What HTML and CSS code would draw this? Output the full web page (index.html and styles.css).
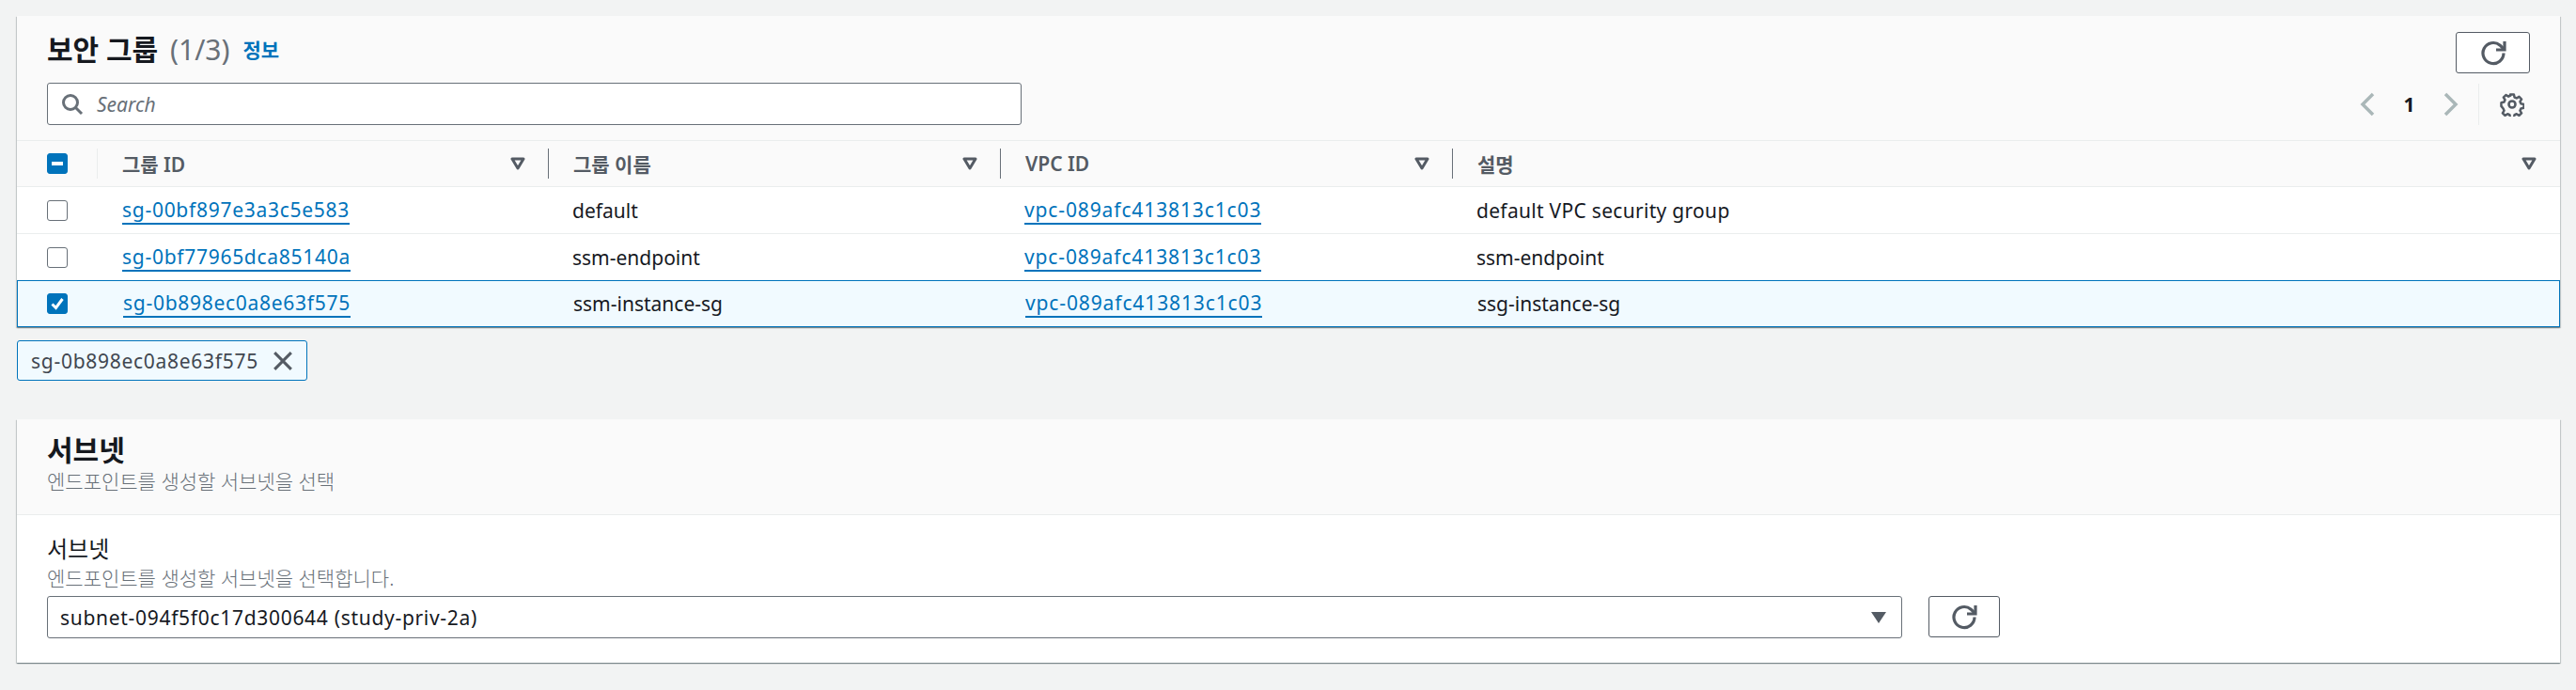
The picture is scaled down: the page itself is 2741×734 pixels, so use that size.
FILE: index.html
```html
<!DOCTYPE html>
<html lang="ko">
<head>
<meta charset="utf-8">
<title>보안 그룹</title>
<link rel="stylesheet" href="styles.css">
</head>
<body>
<svg class="defs" width="0" height="0" aria-hidden="true">
  <defs>
    <symbol id="refresh" viewBox="0 0 28 28"><path d="M25 14.500a11 11 0 1 1-3.800-8.300L25 10" fill="none" stroke="currentColor" stroke-width="3.200"/><path d="M26 2v9h-9" fill="none" stroke="currentColor" stroke-width="3.200"/></symbol>
    <symbol id="sort" viewBox="0 0 16 14"><path d="M2 2h12L8 12z" fill="none" stroke="currentColor" stroke-width="3" stroke-linejoin="round"/></symbol>
  </defs>
</svg>
<section class="card card-groups">
  <header class="head">
    <div class="title-row">
      <h2 class="title">보안 그룹 <span class="count">(1/3)</span></h2>
      <a class="info">정보</a>
      <button class="btn btn-top"><svg class="ico-refresh"><use href="#refresh"/></svg></button>
    </div>
    <div class="tools">
      <div class="search">
        <svg class="ico-search" viewBox="0 0 24 24"><circle cx="10" cy="10" r="7.500" fill="none" stroke="currentColor" stroke-width="3"/><path d="M15.500 15.500 22 22" fill="none" stroke="currentColor" stroke-width="3"/></svg>
        <span class="placeholder">Search</span>
      </div>
      <div class="pager">
        <svg class="chev" viewBox="0 0 16 26"><path d="M14 2 3 13l11 11" fill="none" stroke="currentColor" stroke-width="3.500"/></svg>
        <span class="page">1</span>
        <svg class="chev" viewBox="0 0 16 26"><path d="m2 2 11 11L2 24" fill="none" stroke="currentColor" stroke-width="3.500"/></svg>
      </div>
      <div class="prefs">
        <svg class="gear" viewBox="0 0 26 26"><path d="M11 2h4l.7 3.200 2.300 1 2.800-1.700 2.700 2.800-1.700 2.700 1 2.300 3.200.7v3.900l-3.200.8-1 2.300 1.700 2.700-2.700 2.700-2.800-1.700-2.300 1-.7 3.200h-4l-.7-3.200-2.300-1-2.800 1.700-2.700-2.700 1.700-2.700-1-2.300L1 15v-3.900l3.200-.7 1-2.300-1.700-2.700 2.700-2.800 2.800 1.700 2.300-1z" transform="translate(.5 .5) scale(.96)" fill="none" stroke="currentColor" stroke-width="2.600" stroke-linejoin="round"/><circle cx="13" cy="13" r="3.500" fill="none" stroke="currentColor" stroke-width="2.600"/></svg>
      </div>
    </div>
  </header>
  <div class="row row-head">
    <div class="cell cell-check"><span class="check on"><span class="dash"></span></span></div>
    <div class="cell"><span class="th">그룹 ID</span><svg class="sort"><use href="#sort"/></svg></div>
    <div class="cell"><span class="th">그룹 이름</span><svg class="sort"><use href="#sort"/></svg></div>
    <div class="cell"><span class="th">VPC ID</span><svg class="sort"><use href="#sort"/></svg></div>
    <div class="cell cell-last"><span class="th">설명</span><svg class="sort"><use href="#sort"/></svg></div>
  </div>
  <div class="row">
    <div class="cell cell-check"><span class="check"></span></div>
    <div class="cell"><a class="link">sg-00bf897e3a3c5e583</a></div>
    <div class="cell">default</div>
    <div class="cell"><a class="link link-vpc">vpc-089afc413813c1c03</a></div>
    <div class="cell cell-desc">default VPC security group</div>
  </div>
  <div class="row">
    <div class="cell cell-check"><span class="check"></span></div>
    <div class="cell"><a class="link">sg-0bf77965dca85140a</a></div>
    <div class="cell">ssm-endpoint</div>
    <div class="cell"><a class="link link-vpc">vpc-089afc413813c1c03</a></div>
    <div class="cell">ssm-endpoint</div>
  </div>
  <div class="row row-selected">
    <div class="cell cell-check"><span class="check on"><svg class="tick" viewBox="0 0 16 16"><path d="M2.500 8.500 6.500 12.500 13.500 3" fill="none" stroke="#fff" stroke-width="3"/></svg></span></div>
    <div class="cell"><a class="link">sg-0b898ec0a8e63f575</a></div>
    <div class="cell">ssm-instance-sg</div>
    <div class="cell"><a class="link link-vpc">vpc-089afc413813c1c03</a></div>
    <div class="cell">ssg-instance-sg</div>
  </div>
</section>
<div class="token">
  <span class="token-text">sg-0b898ec0a8e63f575</span>
  <svg class="ico-x" viewBox="0 0 20 20"><path d="m2 2 16 16M18 2 2 18" fill="none" stroke="currentColor" stroke-width="2.800"/></svg>
</div>
<section class="card card-subnet">
  <header class="head-subnet">
    <h2 class="title">서브넷</h2>
    <p class="desc">엔드포인트를 생성할 서브넷을 선택</p>
  </header>
  <div class="body">
    <label class="label">서브넷</label>
    <p class="desc desc-field">엔드포인트를 생성할 서브넷을 선택합니다.</p>
    <div class="field-row">
      <div class="select">
        <span class="select-text">subnet-094f5f0c17d300644 (study-priv-2a)</span>
        <svg class="caret" viewBox="0 0 16 12"><path d="M0 0h16L8 12z" fill="currentColor"/></svg>
      </div>
      <button class="btn btn-field"><svg class="ico-refresh"><use href="#refresh"/></svg></button>
    </div>
  </div>
</section>
</body>
</html>
```
FILE: styles.css
```css
* { box-sizing: border-box; }
html, body { margin: 0; }
body {
  background: #f2f3f3;
  padding: 17px 17px 0 18px;
  font-family: "Noto Sans", "Noto Sans CJK KR", sans-serif;
  font-size: 21px;
  color: #16191f;
  height: 734px;
  overflow: hidden;
}
.defs { position: absolute; }
.card {
  background: #fff;
  box-shadow: 0 1px 1px 0 rgba(0,28,36,.3), 1px 1px 1px 0 rgba(0,28,36,.15), -1px 1px 1px 0 rgba(0,28,36,.15);
}
.card-groups { height: 331px; }
.head { background: #fafafa; height: 132px; padding: 17px 32px 0; }
.title-row { display: flex; align-items: flex-start; height: 54px; }
.title { margin: 0; font-size: 30px; font-weight: 700; line-height: 38px; }
.count { font-weight: 400; color: #687078; margin-left: 5px; }
.info { color: #0073bb; font-size: 21px; font-weight: 700; line-height: 38px; margin-left: 14px; }
.btn {
  background: #fff;
  border: 1px solid #545b64;
  border-radius: 3px;
  color: #545b64;
  display: flex;
  align-items: center;
  justify-content: center;
  padding: 0;
}
.btn-top { width: 79px; height: 44px; margin-left: auto; }
.ico-refresh { width: 28px; height: 28px; }
.tools { display: flex; align-items: center; height: 45px; }
.search {
  width: 1037px;
  height: 45px;
  background: #fff;
  border: 1px solid #687078;
  border-radius: 3px;
  display: flex;
  align-items: center;
  padding-left: 14px;
  color: #687078;
}
.ico-search { width: 24px; height: 24px; }
.placeholder { font-style: italic; margin-left: 14px; font-size: 21px; }
.pager { margin-left: auto; display: flex; align-items: center; color: #aab7b8; }
.chev { width: 16px; height: 26px; }
.page { color: #16191f; font-weight: 700; width: 73px; text-align: center; font-size: 21px; }
.prefs { margin-left: 21px; padding: 0 6px 0 22px; border-left: 1px solid #eaeded; height: 44px; display: flex; align-items: center; }
.gear { width: 26px; height: 26px; color: #545b64; display: block; }
.row {
  display: grid;
  grid-template-columns: 86px 479px 481px 481px 1fr;
  height: 50px;
  border-top: 1px solid #eaeded;
  align-items: center;
}
.row-head { background: #fafafa; height: 49px; color: #545b64; font-weight: 600; }
.row-selected {
  background: #f1faff;
  border: 1px solid #0073bb;
  height: 50px;
}
.cell { display: flex; align-items: center; padding-left: 26px; height: 32px; justify-content: space-between; padding-right: 24px; }
.cell-check { padding-left: 32px; padding-right: 0; justify-content: flex-start; }
.cell-desc { letter-spacing: .3px; }
.row-selected .cell-check { padding-left: 31px; }
.row-head .cell { border-left: 1px solid #687078; }
.row-head .cell-check { border-left: 0; border-right: 1px solid #eaeded; }
.row-head .cell:nth-child(2) { border-left: 0; }
.row-head .cell-last { padding-right: 25px; }
.sort { width: 16px; height: 14px; color: #545b64; }
.check {
  width: 22px;
  height: 22px;
  border: 1px solid #687078;
  border-radius: 3px;
  background: #fff;
  display: flex;
  align-items: center;
  justify-content: center;
}
.check.on { background: #0073bb; border-color: #0073bb; }
.dash { width: 12px; height: 4px; background: #fff; }
.tick { width: 16px; height: 16px; }
.link { color: #0073bb; border-bottom: 2px solid #0073bb; line-height: 27px; padding-top: 1px; letter-spacing: .72px; }
.link-vpc { letter-spacing: .88px; }
.token {
  width: 309px;
  height: 43px;
  margin-top: 14px;
  background: #f1faff;
  border: 1px solid #0073bb;
  border-radius: 3px;
  display: flex;
  align-items: center;
  justify-content: space-between;
  padding: 0 14px;
  color: #414750;
}
.token-text { letter-spacing: .72px; }
.ico-x { width: 22px; height: 22px; color: #545b64; }
.card-subnet { margin-top: 41px; height: 259px; }
.head-subnet { background: #fafafa; height: 102px; padding: 14px 32px 0; border-bottom: 1px solid #eaeded; }
.head-subnet .title { line-height: 38px; }
.desc { margin: 0; color: #687078; font-size: 21px; line-height: 28px; font-weight: 300; }
.body { padding: 19px 32px 0; }
.label { display: block; font-size: 24px; line-height: 34px; }
.desc-field { line-height: 28px; }
.field-row { display: flex; align-items: flex-start; margin-top: 5px; }
.select {
  width: 1974px;
  height: 45px;
  border: 1px solid #687078;
  border-radius: 3px;
  display: flex;
  align-items: center;
  justify-content: space-between;
  padding: 0 16px 0 13px;
}
.select-text { letter-spacing: .7px; }
.caret { width: 16px; height: 12px; color: #545b64; }
.btn-field { width: 76px; height: 44px; margin-left: 28px; }
```
